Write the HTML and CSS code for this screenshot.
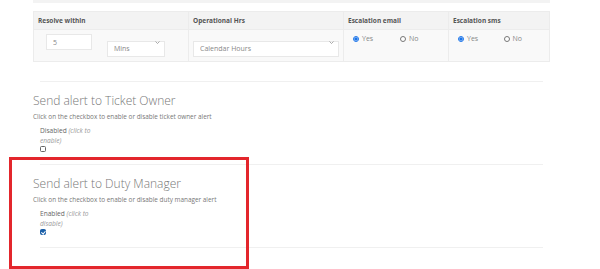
FILE: index.html
```html
<!DOCTYPE html>
<html lang="en">
<head>
    <meta charset="UTF-8">
    <meta name="viewport" content="width=device-width, initial-scale=1.0">
    <title>Escalation Settings</title>
    <link rel="stylesheet" href="styles.css">
</head>
<body>
    <div class="page">
        <div class="top-strip"></div>

        <table class="sla-table">
            <thead>
                <tr>
                    <th class="col-resolve">Resolve within</th>
                    <th class="col-hours">Operational Hrs</th>
                    <th class="col-email">Escalation email</th>
                    <th class="col-sms">Escalation sms</th>
                </tr>
            </thead>
            <tbody>
                <tr>
                    <td>
                        <div class="resolve-fields">
                            <input type="text" class="field field-num" value="5">
                            <div class="select-wrap select-unit">
                                <select class="field">
                                    <option>Mins</option>
                                    <option>Hours</option>
                                    <option>Days</option>
                                </select>
                                <svg class="chevron" viewBox="0 0 10 6"><path d="M1 1l4 4 4-4" fill="none" stroke="#888" stroke-width="1.4"/></svg>
                            </div>
                        </div>
                    </td>
                    <td>
                        <div class="select-wrap select-hours">
                            <select class="field">
                                <option>Calendar Hours</option>
                                <option>Business Hours</option>
                            </select>
                            <svg class="chevron" viewBox="0 0 10 6"><path d="M1 1l4 4 4-4" fill="none" stroke="#888" stroke-width="1.4"/></svg>
                        </div>
                    </td>
                    <td>
                        <div class="radio-row">
                            <label class="radio"><input type="radio" name="email" checked> Yes</label>
                            <label class="radio"><input type="radio" name="email"> No</label>
                        </div>
                    </td>
                    <td>
                        <div class="radio-row">
                            <label class="radio"><input type="radio" name="sms" checked> Yes</label>
                            <label class="radio"><input type="radio" name="sms"> No</label>
                        </div>
                    </td>
                </tr>
            </tbody>
        </table>

        <div class="divider first"></div>

        <div class="alert-block">
            <h3>Send alert to Ticket Owner</h3>
            <p class="hint">Click on the checkbox to enable or disable ticket owner alert</p>
            <div class="toggle">
                <div class="toggle-label">Disabled <em>(click to</em></div>
                <div class="toggle-label"><em>enable)</em></div>
                <input type="checkbox" class="check">
            </div>
        </div>

        <div class="divider"></div>

        <div class="alert-block">
            <h3>Send alert to Duty Manager</h3>
            <p class="hint">Click on the checkbox to enable or disable duty manager alert</p>
            <div class="toggle">
                <div class="toggle-label">Enabled <em>(click to</em></div>
                <div class="toggle-label"><em>disable)</em></div>
                <input type="checkbox" class="check" checked>
            </div>
        </div>

        <div class="divider"></div>
    </div>

    <div class="highlight"></div>
</body>
</html>
```

FILE: styles.css
```css
:root {
    --text: #666;
    --muted: #888;
    --line: #ececec;
    --head-bg: #f3f3f3;
    --row-bg: #f9f9f9;
    --mark: #e3262c;
}

* {
    box-sizing: border-box;
    margin: 0;
    padding: 0;
}

body {
    font-family: 'Open Sans', 'Liberation Sans', sans-serif;
    background: #fff;
    color: var(--text);
    position: relative;
    height: 269px;
    overflow: hidden;
}

.page {
    margin-left: 33px;
    width: 517px;
}

.top-strip {
    height: 3px;
    background: #f3f3f3;
    margin-bottom: 8px;
}

/* SLA table */
.sla-table {
    width: 100%;
    border-collapse: collapse;
    border: 1px solid var(--line);
    table-layout: fixed;
}

.sla-table th {
    height: 18px;
    background: var(--head-bg);
    border: 1px solid var(--line);
    text-align: left;
    font-size: 6.5px;
    font-weight: 700;
    color: #555;
    padding-left: 4px;
}

.col-resolve { width: 155px; }
.col-hours { width: 155px; }
.col-email { width: 105px; }

.sla-table td {
    height: 32px;
    background: var(--row-bg);
    border: 1px solid var(--line);
    vertical-align: top;
    padding-top: 4px;
}

.resolve-fields {
    display: flex;
    gap: 15px;
    padding-left: 12px;
}

.field {
    height: 16px;
    border: 1px solid #e8e8e8;
    background: #fff;
    font-family: inherit;
    font-size: 7px;
    color: #888;
    padding: 0 6px;
    outline: none;
}

.field-num {
    width: 46px;
}

.select-wrap {
    position: relative;
}

.select-wrap select {
    appearance: none;
    width: 100%;
}

.select-unit {
    width: 58px;
}

.select-hours {
    width: 146px;
    margin-left: 4px;
}

.chevron {
    position: absolute;
    right: 5px;
    top: 7px;
    width: 5px;
    height: 3px;
}

.radio-row {
    display: flex;
    padding-left: 9px;
}

.radio {
    display: flex;
    align-items: center;
    gap: 3px;
    width: 47px;
    font-size: 7px;
    color: #888;
    line-height: 9px;
}

.radio input {
    width: 6px;
    height: 6px;
    margin: 0;
    accent-color: #1a73e8;
}

/* Alert sections */
.divider {
    height: 1px;
    background: #f0f0f0;
    margin: 0 7px;
}

.divider.first {
    margin-top: 19px;
}

.alert-block {
    padding: 12px 0 12px;
}

.alert-block h3 {
    font-size: 12px;
    font-weight: 300;
    color: #777;
    line-height: 14px;
}

.hint {
    font-size: 6.4px;
    color: #777;
    line-height: 9px;
    margin-top: 4px;
}

.toggle {
    margin-top: 5px;
    padding-left: 7px;
}

.toggle-label {
    font-size: 6.6px;
    line-height: 9.5px;
    color: #666;
}

.toggle-label em {
    color: #999;
}

.check {
    appearance: none;
    display: block;
    width: 6px;
    height: 6px;
    margin: 1px 0 0;
    border: 1px solid #666;
    border-radius: 1.5px;
    background: #fff;
    position: relative;
}

.check:checked {
    background: #1a5fa8;
    border-color: #1a5fa8;
}

.check:checked::after {
    content: "";
    position: absolute;
    left: 1.2px;
    top: 0;
    width: 1.5px;
    height: 2.8px;
    border: solid #fff;
    border-width: 0 1px 1px 0;
    transform: rotate(40deg);
}

/* review highlight drawn over the duty manager block */
.highlight {
    position: absolute;
    left: 9px;
    top: 157px;
    width: 240px;
    height: 112px;
    border: 3px solid var(--mark);
}
```
